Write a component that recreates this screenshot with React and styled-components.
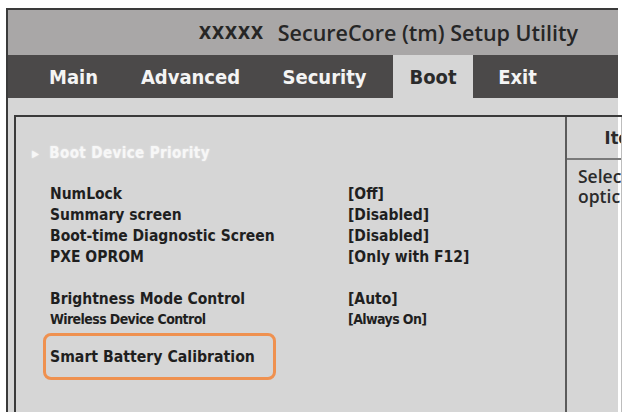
import React from "react";
import styled, { createGlobalStyle } from "styled-components";

const GlobalStyle = createGlobalStyle`
  html, body {
    margin: 0;
    padding: 0;
    background: #ffffff;
    overflow: hidden;
  }
  body {
    font-family: "DejaVu Sans Condensed", "DejaVu Sans", sans-serif;
  }
`;

const Page = styled.div`
  width: 623px;
  height: 412px;
  padding: 8px 5px 0 6px;
  box-sizing: border-box;
  overflow: hidden;
`;

const Window = styled.div`
  height: 100%;
  display: flex;
  flex-direction: column;
  border-top: 2px solid #3a3a3a;
  border-left: 2px solid #3a3a3a;
  background: #d6d6d6;
`;

const TitleBar = styled.div`
  height: 45px;
  flex: none;
  display: flex;
  align-items: center;
  justify-content: flex-end;
  padding-right: 40px;
  background: #a9a7a7;
  color: #262626;
  font-family: "Open Sans", sans-serif;
  font-weight: 600;
  font-size: 21.5px;
  white-space: nowrap;
`;

const Brand = styled.span`
  font-family: "DejaVu Sans Condensed", sans-serif;
  font-weight: bold;
  font-size: 18px;
  letter-spacing: 0.5px;
  margin-right: 14px;
`;

const TabBar = styled.div`
  height: 43px;
  flex: none;
  display: flex;
  align-items: stretch;
  padding-left: 14px;
  background: #4b4949;
`;

const Tab = styled.div`
  width: ${({ $w }) => $w}px;
  display: flex;
  align-items: center;
  justify-content: center;
  font-weight: bold;
  font-size: 20px;
  color: ${({ $active }) => ($active ? "#2b2b2b" : "#f4f4f4")};
  background: ${({ $active }) => ($active ? "#d6d6d6" : "transparent")};
`;

const Body = styled.div`
  flex: 1;
  padding: 17px 0 0 6px;
  display: flex;
  min-height: 0;
`;

const Panel = styled.div`
  flex: 1;
  display: flex;
  border-top: 2px solid #3a3a3a;
  border-left: 2px solid #3a3a3a;
`;

const Settings = styled.div`
  width: 551px;
  flex: none;
  padding: 25px 0 0 14px;
  box-sizing: border-box;
  border-right: 2px solid #5c5c5c;
`;

const Help = styled.div`
  flex: 1;
  border-right: 1px solid #bdbdbd;
  overflow: hidden;
  white-space: nowrap;
`;

const HelpHead = styled.div`
  height: 41px;
  display: flex;
  align-items: center;
  justify-content: flex-end;
  border-bottom: 2px solid #7a7a7a;
  font-weight: bold;
  font-size: 18px;
  color: #2b2b2b;
  margin-right: -8px;
`;

const HelpText = styled.div`
  padding: 6px 0 0 11px;
  display: flex;
  flex-direction: column;
`;

const HelpLine = styled.div`
  height: 20px;
  line-height: 20px;
  font-family: "Open Sans", sans-serif;
  font-weight: 600;
  font-size: 17.5px;
  color: #2b2b2b;
`;

const SubMenu = styled.div`
  display: flex;
  align-items: center;
  gap: 10px;
  height: 22px;
  font-weight: bold;
  font-size: 15px;
  letter-spacing: 0.4px;
  color: #f7f7f7;
  text-shadow: 0 0 2px rgba(255, 255, 255, 0.6);
  margin-bottom: 19px;
`;

const Arrow = styled.span`
  font-size: 10px;
  margin-left: 2px;
`;

const Group = styled.div`
  padding-left: 20px;
  margin-bottom: ${({ $gap }) => $gap}px;
`;

const Row = styled.div`
  display: grid;
  grid-template-columns: 298px auto;
  height: ${({ $h }) => $h || 21}px;
  align-items: center;
  font-weight: bold;
  font-size: ${({ $narrow }) => ($narrow ? 14 : 15.5)}px;
  letter-spacing: ${({ $narrow }) => ($narrow ? -0.6 : 0)}px;
  color: #1f1f1f;
  white-space: nowrap;
`;

const Highlight = styled.div`
  display: inline-flex;
  align-items: center;
  margin-left: -7px;
  padding: 0 4px;
  width: 233px;
  height: 47px;
  box-sizing: border-box;
  border: 3px solid #ef9150;
  border-radius: 8px;
  font-weight: bold;
  font-size: 15.7px;
  color: #1f1f1f;
  white-space: nowrap;
`;

const main = [
  ["NumLock", "[Off]"],
  ["Summary screen", "[Disabled]"],
  ["Boot-time Diagnostic Screen", "[Disabled]"],
  ["PXE OPROM", "[Only with F12]"],
];

const tabs = [
  { label: "Main", w: 103 },
  { label: "Advanced", w: 131 },
  { label: "Security", w: 137 },
  { label: "Boot", w: 80, active: true },
  { label: "Exit", w: 89 },
];

export default function App() {
  return (
    <Page>
      <GlobalStyle />
      <Window>
        <TitleBar>
          <Brand>XXXXX</Brand>SecureCore (tm) Setup Utility
        </TitleBar>
        <TabBar>
          {tabs.map((t) => (
            <Tab key={t.label} $w={t.w} $active={t.active}>
              {t.label}
            </Tab>
          ))}
        </TabBar>
        <Body>
          <Panel>
            <Settings>
              <SubMenu>
                <Arrow>▶</Arrow>Boot Device Priority
              </SubMenu>
              <Group $gap={21}>
                {main.map(([k, v]) => (
                  <Row key={k}>
                    <span>{k}</span>
                    <span>{v}</span>
                  </Row>
                ))}
              </Group>
              <Group $gap={5}>
                <Row>
                  <span>Brightness Mode Control</span>
                  <span>[Auto]</span>
                </Row>
                <Row $narrow $h={19}>
                  <span>Wireless Device Control</span>
                  <span>[Always On]</span>
                </Row>
              </Group>
              <Group $gap={0}>
                <Highlight>Smart Battery Calibration</Highlight>
              </Group>
            </Settings>
            <Help>
              <HelpHead>Ite</HelpHead>
              <HelpText>
                <HelpLine>Selec</HelpLine>
                <HelpLine>optic</HelpLine>
              </HelpText>
            </Help>
          </Panel>
        </Body>
      </Window>
    </Page>
  );
}
